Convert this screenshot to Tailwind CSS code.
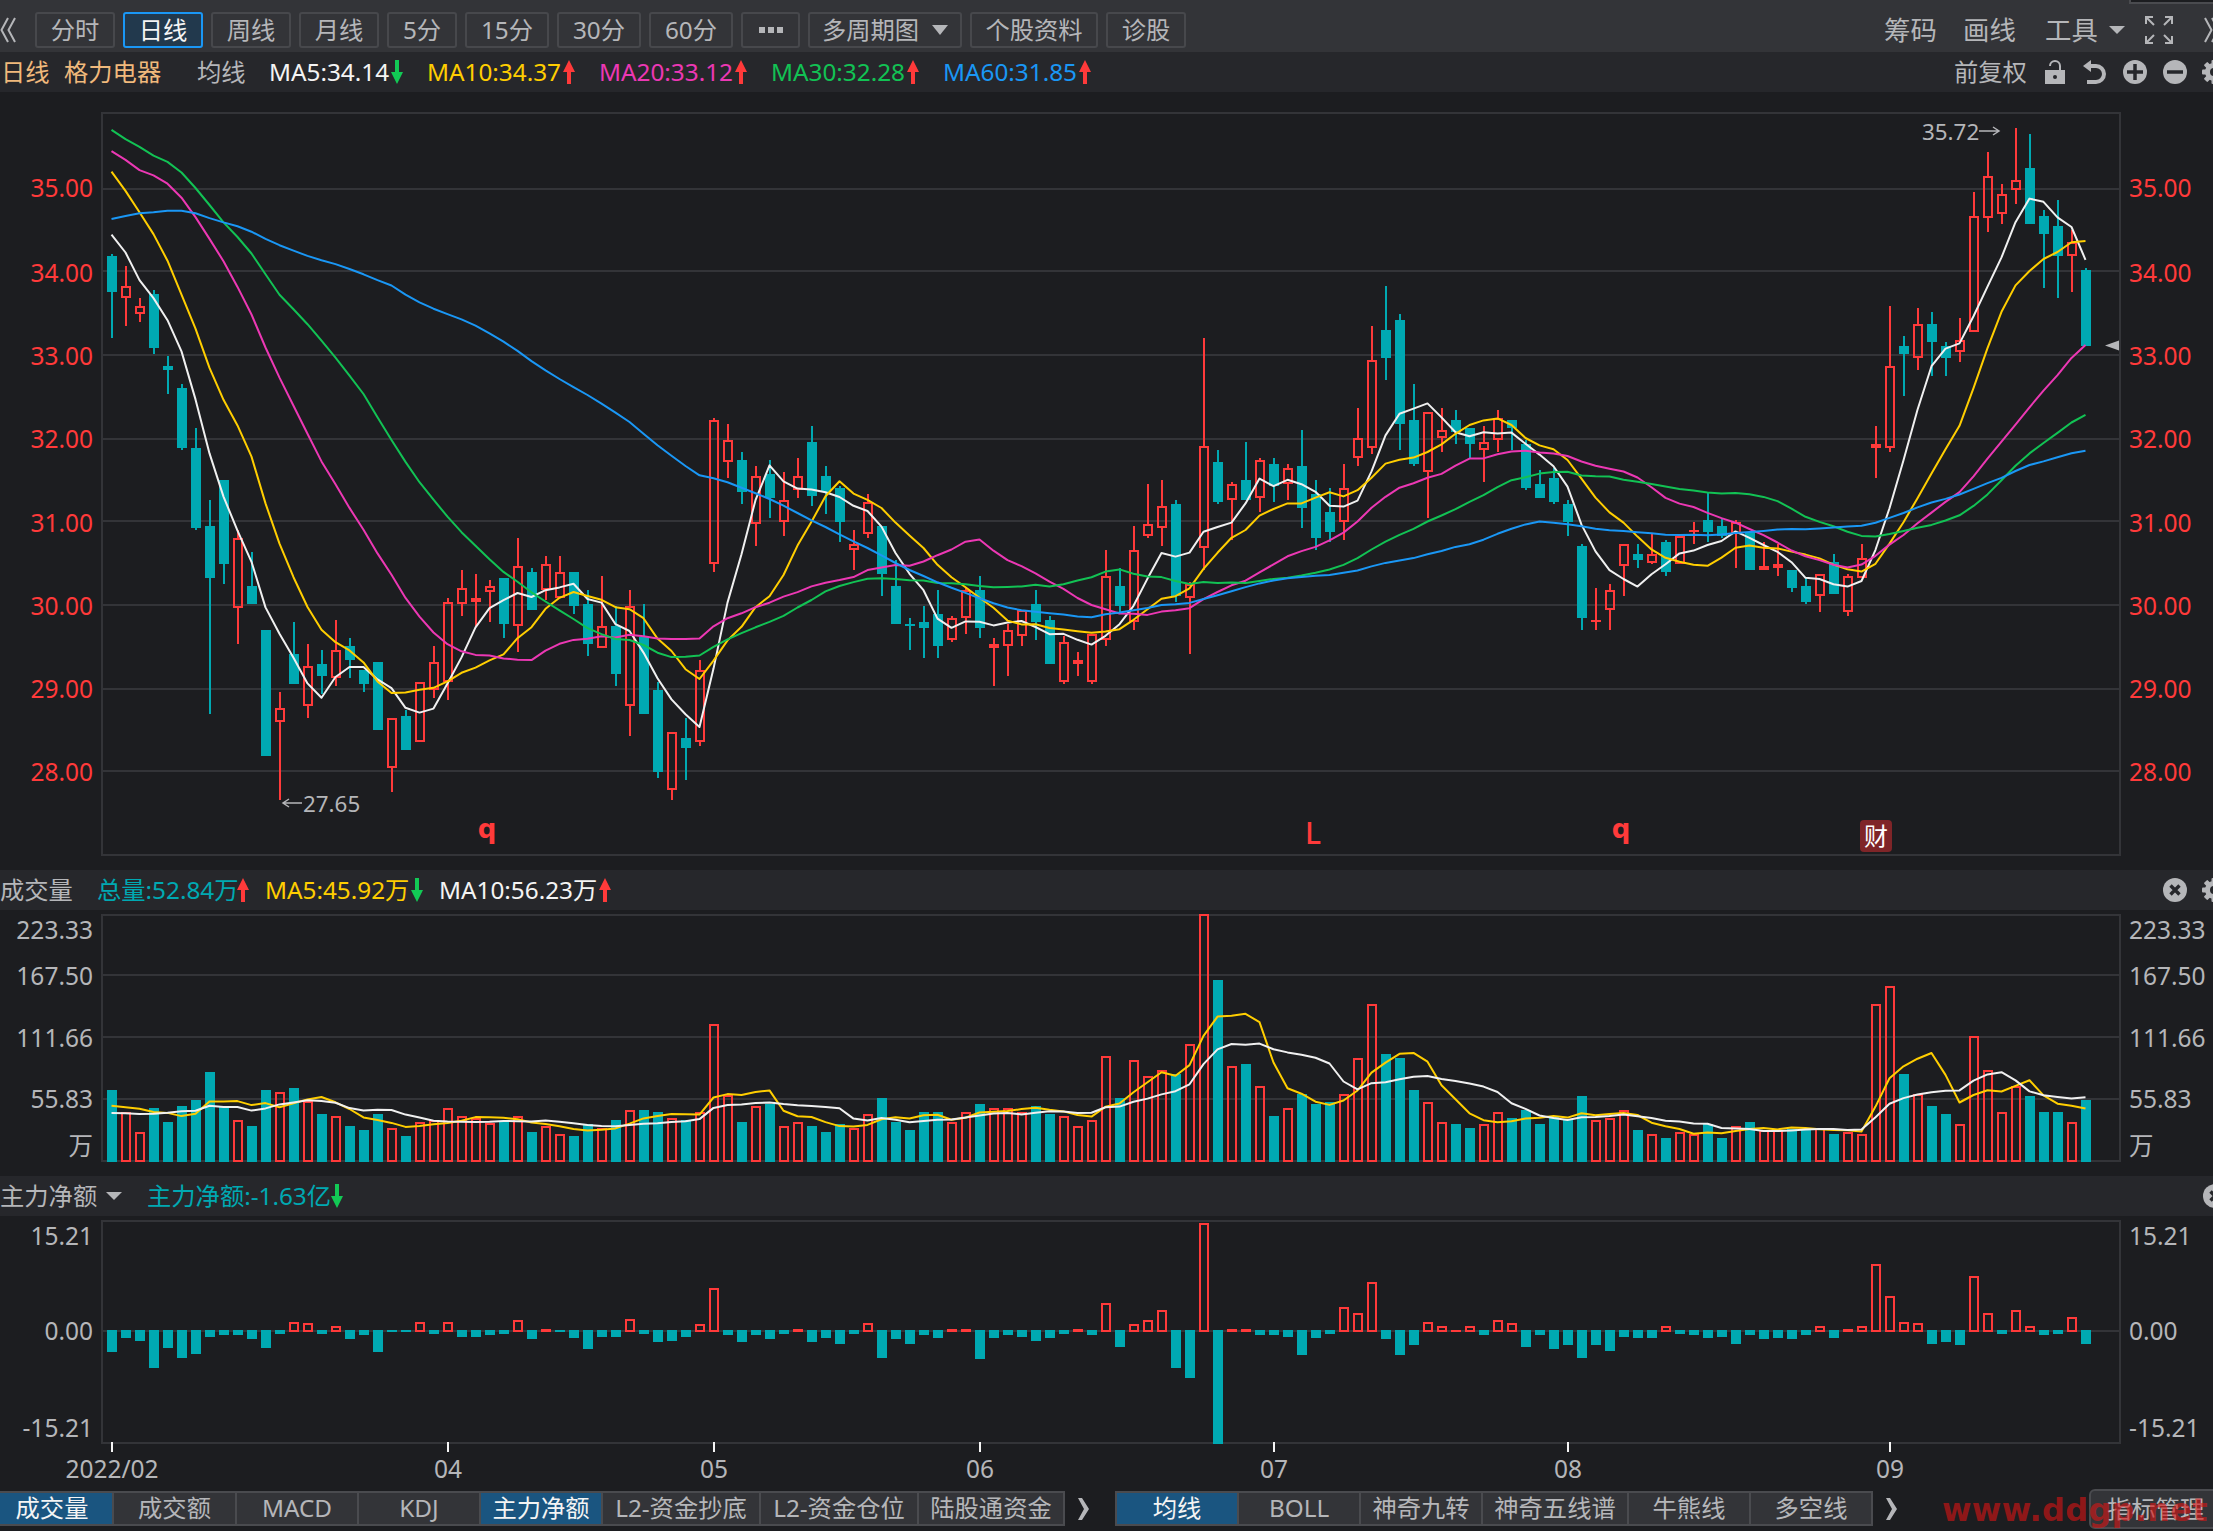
<!DOCTYPE html>
<html lang="zh-CN">
<head>
<meta charset="utf-8">
<title>格力电器 日线</title>
<script src="https://cdn.jsdelivr.net/npm/@tailwindcss/browser@4"></script>
</head>
<body class="bg-[#1c1d20] text-[#b5b6b9] w-[2213px] h-[1531px] overflow-hidden text-[24.3px] leading-none whitespace-nowrap font-['Noto_Sans','Noto_Sans_CJK_SC',sans-serif]">
<svg class="hidden">
  <defs>
    <symbol id="up" viewBox="0 0 12 24"><path d="M6 0 12 12H8V24H4V12H0Z" fill="#ff3a3a"/></symbol>
    <symbol id="down" viewBox="0 0 12 24"><path d="M6 24 0 12H4V0H8V12H12Z" fill="#12c955"/></symbol>
    <symbol id="gear" viewBox="0 0 24 24"><g fill="#b5b6b9"><rect x="9.5" y="0" width="5" height="24" rx="1"/><rect x="9.5" y="0" width="5" height="24" rx="1" transform="rotate(45 12 12)"/><rect x="9.5" y="0" width="5" height="24" rx="1" transform="rotate(90 12 12)"/><rect x="9.5" y="0" width="5" height="24" rx="1" transform="rotate(135 12 12)"/><circle cx="12" cy="12" r="9"/></g><circle cx="12" cy="12" r="4" fill="#26272b"/></symbol>
    <symbol id="close" viewBox="0 0 24 24"><circle cx="12" cy="12" r="12" fill="#b5b6b9"/><path d="M7.5 7.5 16.5 16.5M16.5 7.5 7.5 16.5" stroke="#26272b" stroke-width="3.4"/></symbol>
  </defs>
</svg>
<div class="flex flex-col w-[2213px] h-[1531px]">
  <!-- period toolbar -->
  <div class="relative flex h-[52px] shrink-0 items-center bg-[#333438] pt-2">
    <svg class="w-[35px] h-7 shrink-0" viewBox="0 0 35 28" fill="none" stroke="#b5b6b9" stroke-width="2"><path d="M8 2 1.5 14 8 26M15 2 8.5 14 15 26"/></svg>
    <div class="flex gap-2 [&>div]:flex [&>div]:h-9 [&>div]:items-center [&>div]:justify-center [&>div]:rounded-[3px] [&>div]:border-2">
      <div class="w-20 border-[#47484c]">分时</div>
      <div class="w-20 border-[#1a97f5] bg-[#22394d] text-[#f4f4f4]">日线</div>
      <div class="w-20 border-[#47484c]">周线</div>
      <div class="w-20 border-[#47484c]">月线</div>
      <div class="w-[70px] border-[#47484c]">5分</div>
      <div class="w-[84px] border-[#47484c]">15分</div>
      <div class="w-[84px] border-[#47484c]">30分</div>
      <div class="w-[84px] border-[#47484c]">60分</div>
      <div class="w-[59px] gap-[3px] border-[#47484c]"><i class="size-[6px] bg-[#b5b6b9]"></i><i class="size-[6px] bg-[#b5b6b9]"></i><i class="size-[6px] bg-[#b5b6b9]"></i></div>
      <div class="w-[154px] gap-[13px] border-[#47484c]"><span>多周期图</span><svg class="w-4 h-[10px]" viewBox="0 0 16 10"><path d="M0 0H16L8 10Z" fill="#b5b6b9"/></svg></div>
      <div class="w-32 border-[#47484c]">个股资料</div>
      <div class="w-20 border-[#47484c]">诊股</div>
    </div>
    <div class="ml-[698px] flex shrink-0 items-center text-[26.4px]">
      <span class="w-[79px]">筹码</span><span class="w-[82px]">画线</span><span class="w-[64px]">工具</span>
      <svg class="w-4 h-2" viewBox="0 0 16 8"><path d="M0 0H16L8 8Z" fill="#b5b6b9"/></svg>
      <svg class="ml-5 size-7 shrink-0" viewBox="0 0 28 28" fill="none" stroke="#b5b6b9" stroke-width="2"><path d="M1 8V1H8M1 1 9 9M20 1H27V8M27 1 19 9M1 20V27H8M1 27 9 19M20 27H27V20M27 27 19 19"/></svg>
      <svg class="ml-[31px] h-7 w-[15px] shrink-0" viewBox="0 0 15 28" fill="none" stroke="#b5b6b9" stroke-width="2"><path d="M1 2 7.500 14 1 26M8 2 14.500 14 8 26"/></svg>
    </div>
    <div class="absolute right-0 top-0 h-1 w-[84px] border-b-2 border-l-2 border-[#4a4b4f] bg-[#1c1d20]"></div>
  </div>
  <!-- moving average legend -->
  <div class="flex h-10 shrink-0 items-center overflow-hidden bg-[#26272b] pl-[1px] [&>svg]:h-6 [&>svg]:w-3 [&>svg]:shrink-0 [&>span]:shrink-0">
    <span class="w-[63px] text-[#f0b97c]">日线</span><span class="w-[133px] text-[#f0b97c]">格力电器</span><span class="w-[72px]">均线</span>
    <span class="w-[122px] text-[#f4f4f4]">MA5:34.14</span><svg><use href="#down"/></svg>
    <span class="ml-6 w-[136px] text-[#ffce00]">MA10:34.37</span><svg><use href="#up"/></svg>
    <span class="ml-[24px] w-[136px] text-[#ec38b4]">MA20:33.12</span><svg><use href="#up"/></svg>
    <span class="ml-[24px] w-[136px] text-[#12c254]">MA30:32.28</span><svg><use href="#up"/></svg>
    <span class="ml-[24px] w-[136px] text-[#1a97f5]">MA60:31.85</span><svg><use href="#up"/></svg>
    <div class="ml-[863px] flex shrink-0 items-center">
      <span class="w-[91px]">前复权</span>
      <svg class="h-6 w-5" viewBox="0 0 20 24"><rect y="10" width="20" height="14" fill="#b5b6b9"/><path d="M5 6a5 5 0 0 1 10 0v5" fill="none" stroke="#b5b6b9" stroke-width="2"/><circle cx="10" cy="17" r="2" fill="#26272b"/></svg>
      <svg class="ml-[18px] h-6 w-6" viewBox="0 0 24 24"><path d="M7 6H13a8 8 0 0 1 0 16H4" fill="none" stroke="#b5b6b9" stroke-width="4"/><path d="M0 6 8 0V12Z" fill="#b5b6b9"/></svg>
      <svg class="ml-4 size-6" viewBox="0 0 24 24"><circle cx="12" cy="12" r="12" fill="#b5b6b9"/><path d="M4 12H20M12 4V20" stroke="#26272b" stroke-width="3.500"/></svg>
      <svg class="ml-4 size-6" viewBox="0 0 24 24"><circle cx="12" cy="12" r="12" fill="#b5b6b9"/><path d="M4 12H20" stroke="#26272b" stroke-width="3.500"/></svg>
      <svg class="ml-[15px] size-6 shrink-0"><use href="#gear"/></svg>
    </div>
  </div>
  <svg id="price" class="h-[778px] w-full shrink-0" viewBox="0 92 2213 778"></svg>
  <!-- volume -->
  <div class="flex h-10 shrink-0 items-center overflow-hidden bg-[#26272b] [&>svg]:h-6 [&>svg]:w-3 [&>svg]:shrink-0 [&>span]:shrink-0">
    <span class="w-[97px]">成交量</span>
    <span class="w-[140px] text-[#00a9b2]">总量:52.84万</span><svg><use href="#up"/></svg>
    <span class="ml-4 w-[146px] text-[#ffce00]">MA5:45.92万</span><svg><use href="#down"/></svg>
    <span class="ml-4 w-[160px] text-[#f4f4f4]">MA10:56.23万</span><svg><use href="#up"/></svg>
    <div class="ml-[1552px] flex shrink-0"><svg class="size-6"><use href="#close"/></svg><svg class="ml-[15px] size-6"><use href="#gear"/></svg></div>
  </div>
  <svg id="volume" class="h-[266px] w-full shrink-0" viewBox="0 910 2213 266"></svg>
  <!-- net inflow -->
  <div class="flex h-10 shrink-0 items-center overflow-hidden bg-[#26272b]">
    <span class="w-[106px] shrink-0">主力净额</span>
    <svg class="h-2 w-4 shrink-0" viewBox="0 0 16 8"><path d="M0 0H16L8 8Z" fill="#b5b6b9"/></svg>
    <span class="ml-[25px] w-[184px] shrink-0 text-[#00a9b2]">主力净额:-1.63亿</span><svg class="h-6 w-3 shrink-0"><use href="#down"/></svg>
    <svg class="ml-[1860px] size-6 shrink-0"><use href="#close"/></svg>
  </div>
  <svg id="flow" class="h-[273px] w-full shrink-0" viewBox="0 1216 2213 273"></svg>
  <!-- indicator tabs -->
  <div class="relative flex h-[42px] shrink-0 overflow-hidden pt-[2px]">
    <div class="flex h-[35px] shrink-0 border-y-2 border-[#4a4b4f] bg-[#333438] [&>div]:flex [&>div]:items-center [&>div]:justify-center [&>div]:border-r-2 [&>div]:border-[#4a4b4f]">
      <div class="w-[114px] bg-[#1a5580] text-[#f4f4f4]"><span class="-ml-2">成交量</span></div><div class="w-[123px]">成交额</div><div class="w-[122px]">MACD</div><div class="w-[122px]">KDJ</div><div class="w-[122px] bg-[#1a5580] text-[#f4f4f4]">主力净额</div><div class="w-[158px]">L2-资金抄底</div><div class="w-[158px]">L2-资金仓位</div><div class="w-[146px]">陆股通资金</div>
    </div>
    <svg class="ml-3 mt-[7px] h-[22px] w-3 shrink-0" viewBox="0 0 12 22"><path d="M1 0H5L12 11 5 22H1L7 11Z" fill="#b5b6b9"/></svg>
    <div class="ml-[26px] flex h-[35px] shrink-0 border-2 border-r-0 border-[#4a4b4f] bg-[#333438] [&>div]:flex [&>div]:items-center [&>div]:justify-center [&>div]:border-r-2 [&>div]:border-[#4a4b4f]">
      <div class="w-[122px] bg-[#1a5580] text-[#f4f4f4]">均线</div><div class="w-[122px]">BOLL</div><div class="w-[122px]">神奇九转</div><div class="w-[146px]">神奇五线谱</div><div class="w-[122px]">牛熊线</div><div class="w-[122px]">多空线</div>
    </div>
    <svg class="ml-3 mt-[7px] h-[22px] w-3 shrink-0" viewBox="0 0 12 22"><path d="M1 0H5L12 11 5 22H1L7 11Z" fill="#b5b6b9"/></svg>
    <div class="-mt-[2px] ml-[192px] flex h-10 w-[132px] shrink-0 items-center rounded-md border-2 border-[#4a4b4f] bg-[#333438] pl-4">指标管理</div>
    <div class="absolute left-[1942px] top-[5px] font-['DejaVu_Sans'] text-[32px] font-bold tracking-[0.3px] text-[#dc1414]/60">www.ddgp.net</div>
  </div>
</div>
<script>
const RED='#ff3a3a',CYAN='#00a9b2',GRID='#333438',GRAY='#b5b6b9';
const X=i=>112+14*i, R=Math.round;
const rows=s=>s.trim().split(/\s+/).map(r=>({up:r[0]==='r',v:r.slice(1).split(',').map(Number)}));
// high, body top, body bottom, low; r = rising, c = falling
const blocks=[
[110,760/1568,`c297,301,375,470 r322,363,388,446 r388,404,421,437 c371,380,491,503 c508,528,536,586 c565,574,697,701 c656,697,862,867 c805,858,966,1246 c763,763,937,978 r867,883,1027,1102 c912,982,1019,1019 c1073,1073,1333,1333 r1201,1234,1263,1424 c1056,1122,1184,1184 r1102,1147,1229,1254 c1114,1143,1168,1205 r1052,1114,1172,1188 c1089,1106,1135,1172 c1155,1155,1184,1201 c1139,1139,1279,1279 r1254,1254,1358,1407 c1238,1250,1320,1320 r1180,1180,1304,1304 r1106,1139,1197,1213 r1007,1015,1180,1217 r949,986,1019,1044 r957,1007,1015,1065 r970,982,994,1056 c966,966,1060,1089 r883,941,1065,1118 c945,953,1032,1032 r920,937,990,1011 r920,953,1007,1007 c953,953,1023,1040 c990,1019,1102,1126 r961,1065,1110,1110`],
[380,1/3,`c678,738,882,918 r630,678,978,1068 c672,770,1002,1002 c905,930,1176,1194 r1056,1056,1230,1260 c1014,1074,1104,1200 r840,870,1086,1098 r114,120,552,576 r132,180,246,294 c216,240,336,372 r258,288,432,498 c240,282,354,414 r276,360,426,468 r234,288,330,354 c138,186,348,378 c258,288,336,402 c318,324,426,486 r450,492,510,570 r342,366,462,474 c438,438,582,648 c540,618,732,732 c714,732,738,810 c678,726,744,834 c630,702,798,834 r708,714,780,786 r624,630,714,762 c588,630,744,774 r774,792,804,918 r732,750,798,888 r690,690,768,798 c630,672,726,780 c708,720,852,852 r768,786,906,912 r816,840,852,888`],
[270,590/1568,`r967,967,1095,1100 r744,813,983,999 c792,840,893,909 r680,744,935,957 r569,675,707,712 r558,627,686,734 c611,622,866,882 r829,834,872,1021 r181,468,739,797 c478,510,617,622 r563,569,611,718 c457,558,611,611 r500,505,606,643 c500,516,574,617 r516,526,569,611 c425,521,633,686 c558,595,712,744 c579,643,696,723 r516,579,670,718 r367,446,500,521 r149,239,473,489 c43,159,234,292 c117,133,409,478 c303,399,516,521 r377,377,537,659 r367,425,446,484 c372,399,430,462 c420,420,462,500 r415,457,478,563 r372,393,452,484 c399,399,420,478 c452,462,579,585 c532,569,606,606 c526,553,617,622 c611,622,670,707`],
[110,760/1568,`c895,900,1048,1073 r986,1052,1056,1073 r978,990,1032,1073 r895,895,941,1003 c895,916,928,945 r875,916,934,937 c887,891,953,961 r879,879,937,937 r850,866,871,895 c790,846,871,891 c842,858,879,883 r846,850,875,945 c871,871,949,949 r891,941,949,949 r895,937,945,961 c949,949,986,994 c965,982,1015,1019 r957,957,1003,1036 c916,933,999,999 r957,961,1036,1044 r895,924,966,966 r652,689,697,759 r404,528,697,706 c466,487,503,590 r409,442,512,536 c417,442,479,549 c479,487,512,549 r429,475,499,520 r169,219,458,458 r87,136,223,252 r153,173,214,235 r37,144,165,194 c50,120,235,235 c206,219,256,367 c186,239,301,388 r248,272,301,376 c326,330,487,487`]];
const bars=blocks.flatMap(([o,k,s])=>rows(s).map(b=>({up:b.up,v:b.v.map(y=>R(o+y*k))})));
const closes=bars.map(b=>b.up?b.v[1]+1:b.v[2]-1);
const A=(s,o=110,k=760/1568)=>s.split(',').map(y=>o+y*k);
const ma=(src,n,head)=>src.map((_,i)=>i<n-1&&i<head.length?head[i]:src.slice(i-n+1,i+1).reduce((a,b)=>a+b,0)/n);
const line=(ys,c)=>`<polyline fill="none" stroke="${c}" stroke-width="2" stroke-linejoin="round" points="${ys.map((y,i)=>(X(i)-.5)+','+y.toFixed(1)).join(' ')}"/>`;
const rect=(x,y,w,h,f)=>`<rect x="${x}" y="${y}" width="${w}" height="${h}" fill="${f}"/>`;
const box=(x,t,b,up)=>b-t<=4||!up?rect(x-5,t,10,Math.max(2,b-t),up?RED:CYAN):`<rect x="${x-4}" y="${t+1}" width="8" height="${b-t-2}" fill="none" stroke="${RED}" stroke-width="2"/>`;
const frame=(t,b,gs)=>[t,b,...gs].map(y=>rect(101,y,2020,2,GRID)).join('')+rect(101,t,2,b-t,GRID)+rect(2119,t,2,b-t,GRID);
const text=(x,y,s,o={})=>`<text x="${x}" y="${y+8.5}" fill="${o.c||GRAY}" font-size="${o.s||24.5}" text-anchor="${o.a||'start'}" font-weight="${o.w||400}"${o.f?` font-family="${o.f}"`:''}>${s}</text>`;
const both=(y,s,c)=>text(93,y,s,{a:'end',c})+text(2129,y,s,{c});

let h=frame(112,854,[188,270,354,438,520,604,688,770]);
[188.5,273,356,439,523,606,689,772].forEach((y,i)=>h+=both(y,(35-i)+'.00',RED));
bars.forEach((b,i)=>{const [hi,t,bo,lo]=b.v,x=X(i),c=b.up?RED:CYAN;
  h+=rect(x-1,hi,2,Math.max(0,t-hi),c)+rect(x-1,bo,2,Math.max(0,lo-bo),c)+box(x,t,bo,b.up);});
const m60=[...A('225,219,213,211,208,208,213,223,232,240,251,266,279,290,301,310,318,328,339,351,362,381,397,410,421,432,445,461,478,497,518,537,555,572,588,606'),...A('98,126,161,196,227,258,286,295,307,323,340,357,377,399,421,441,463,484,504,526,549,570,588',380,1/3)];
h+=line(ma(closes,5,A('257,294,351,388')),'#f0f0f0')
 +line(ma(closes,10,A('127,167,211,256,311,381,451,532,598')),'#ffce00')
 +line(ma(closes,20,A('85,103,124,135,152,181,221,266,312,365,422,490,552,610,668,725,772,821,866')),'#ec38b4')
 +line(ma(closes,30,A('41,60,76,94,107,129,161,196,232,262,296,339,381,411,442,476,511,548,586,634,681,726,768,804,839,871,899,927,953')),'#12c254')
 +line(ma(closes,60,m60),'#1a97f5');
h+=text(1922,131,'35.72',{s:22.4})+`<path d="M1979 131H1999M1993 127 1999 131 1993 135" fill="none" stroke="${GRAY}" stroke-width="1.5"/>`
 +text(303,803,'27.65',{s:22.4})+`<path d="M302 803H283M289 799 283 803 289 807" fill="none" stroke="${GRAY}" stroke-width="1.5"/>`
 +`<path d="M2105 345.500 2119 340.500V350.500Z" fill="${GRAY}"/>`
 +text(487,829,'q',{s:26,w:700,c:RED,a:'middle',f:'DejaVu Sans'})+text(1621,829,'q',{s:26,w:700,c:RED,a:'middle',f:'DejaVu Sans'})
 +text(1313,835,'L',{s:30,w:500,c:RED,a:'middle'})
 +`<rect x="1860" y="820" width="32" height="32" rx="4" fill="#7f2528"/>`+text(1876,836,'财',{s:24,c:'#fff',a:'middle'});
document.getElementById('price').innerHTML=h;

const vol=`690,757,817,744,786,738,720,636,742,781,798,690,697,684,722,762,769,798,810,762,805,828,787,781,745,769,775,790,786,769,816,799,823,828,792,803,780,751,750,756,775,781,757,493,706,786,739,732,799,787,798,816,792,804,763,714,786,810,756,756,787,757,732,745,745,757,738,762,769,799,781,589,714,601,649,631,642,553,163,360,619,612,679,768,745,702,732,726,703,595,433,582,594,690,727,787,792,804,793,757,774,750,792,768,780,708,781,775,751,810,823,834,817,822,792,834,799,786,811,811,806,806,804,822,817,823,433,379,642,703,738,762,793,529,631,757,679,708,756,756,787,720`.split(',').map(y=>860+y/3);
h=frame(914,1160,[974,1036,1098]);
h+=both(930,'223.33')+both(976,'167.50')+both(1038,'111.66')+both(1099,'55.83')+both(1146,'万');
vol.forEach((y,i)=>h+=box(X(i),R(y),1162,bars[i].up));
h+=line(ma(vol,5,A('737,742,746,756',860,1/3)),'#ffce00')+line(ma(vol,10,A('759,760,762,761,758,754,752,737,741',860,1/3)),'#f0f0f0');
document.getElementById('volume').innerHTML=h;

const net=[-15,-5,-7,-26,-12,-19,-16,-4,-3,-3,-6,-12,-2,6,5,-2,3,-6,-3,-15,-1,-1,6,-2,6,-4,-4,-3,-2,7,-6,2,-1,-5,-13,-4,-4,8,-2,-8,-7,-4,4,30,-3,-8,-3,-6,-2,2,-8,-5,-9,-2,5,-19,-6,-9,-3,-5,2,2,-20,-5,-3,-4,-7,-5,-2,2,-3,19,-11,4,7,14,-26,-33,76,-80,2,2,-3,-3,-4,-17,-5,-2,16,12,34,-6,-17,-10,6,3,1,3,-3,7,5,-11,-3,-13,-10,-19,-10,-14,-4,-5,-5,3,-2,-3,-5,-4,-9,-3,-6,-5,-6,-3,3,-5,2,3,47,24,6,5,-9,-8,-10,38,12,-2,14,3,-3,-2,9,-9];
h=frame(1220,1442,[1330]);
h+=both(1236,'15.21')+both(1331,'0.00')+both(1428,'-15.21');
net.forEach((n,i)=>{const p=R(Math.abs(n)*1.411);h+=n>0?box(X(i),1332-Math.max(p+(n>2?2:0),2),1332,true):box(X(i),1330,1331+p,false);});
[[0,'2022/02'],[24,'04'],[43,'05'],[62,'06'],[83,'07'],[104,'08'],[127,'09']].forEach(([i,s])=>h+=rect(X(i)-1,1442,2,10,'#f4f4f4')+text(X(i),1469,s,{a:'middle'}));
document.getElementById('flow').innerHTML=h;
</script>
</body>
</html>
